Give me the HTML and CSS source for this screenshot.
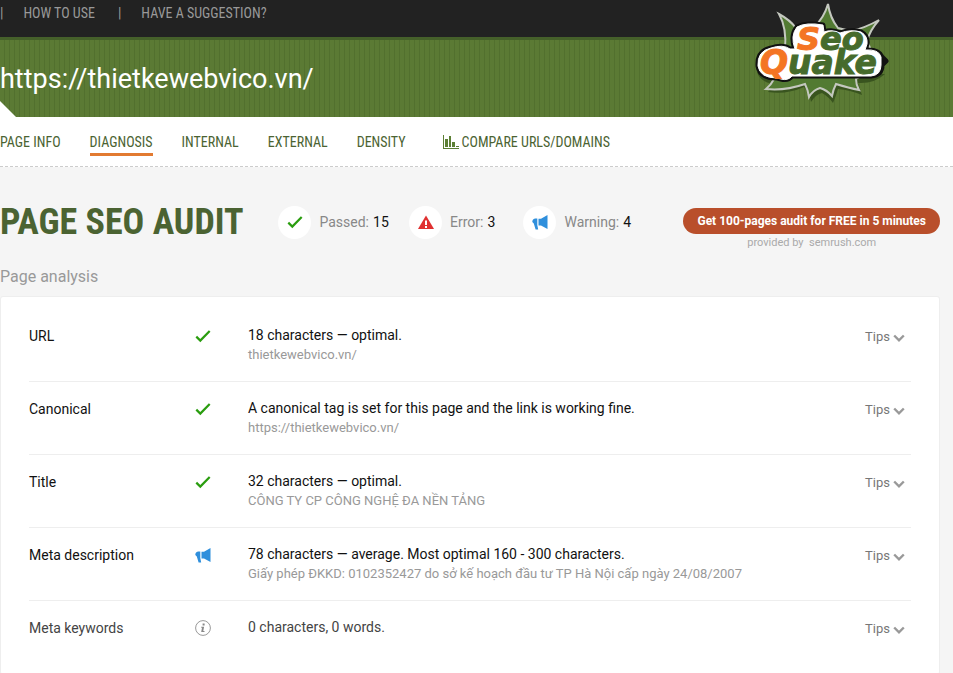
FILE: index.html
```html
<!DOCTYPE html>
<html lang="en">
<head>
    <meta charset="UTF-8">
    <meta name="viewport" content="width=device-width, initial-scale=1.0">
    <title>SEOquake - Diagnosis</title>
    <link rel="stylesheet" href="styles.css">
</head>
<body>
    <svg width="0" height="0" class="sprite" aria-hidden="true">
        <symbol id="check" viewBox="0 0 16 16"><path d="M1.3 8.6 5.3 12.6 14.7 3" fill="none" stroke="#2a9d0f" stroke-width="2.2"/></symbol>
        <symbol id="horn" viewBox="0 0 16 16"><path d="M15.500 1v14L9 11.500H6.500V4.800H9zM5.300 4.500H3Q.2 5 .3 8L1.800 9.500 3.600 15.500h2.600L5.300 11z" fill="#2f8fdc"/></symbol>
        <symbol id="error" viewBox="0 0 16 16"><path d="M8 1.500 16 15H0z" fill="#e03131"/><path d="M7 6.500h2V11H7zM7 12h2v2H7z" fill="#fff"/></symbol>
        <symbol id="info" viewBox="0 0 16 16"><circle cx="8" cy="8" r="7.400" fill="none" stroke="#999"/><path d="M7.600 3.600h2v2h-2zM6.200 6.700h2.900l-.8 4.200h1.200v1H6.200l.8-4.200h-.8z" fill="#888"/></symbol>
        <symbol id="arrow" viewBox="0 0 12 8"><path d="M1.200 1.500 6 6.300l4.800-4.800" fill="none" stroke="#999" stroke-width="2.400"/></symbol>
    </svg>

    <div class="topbar">
        <span>|</span>
        <a href="#how">HOW TO USE</a>
        <span>|</span>
        <a href="#suggest">HAVE A SUGGESTION?</a>
    </div>

    <header class="header">
        <div class="site-url">https://thietkewebvico.vn/</div>
        <a class="logo" href="#home" aria-label="SeoQuake">
            <svg viewBox="0 0 160 115" width="160" height="115">
                <path class="burst-shadow" d="M17 72Q20 82 34 84L28 92Q46 95 64 87 70 94 71 102 76 94 82 93 89 97 93 103 96 96 98 89 110 90 122 95L118 83Q134 84 145 74z"/>
                <path class="burst" d="M39 14Q50 20 56 28L74 27Q84 18 88 4Q90 18 98 28L111 31Q125 28 139 20Q130 30 127 41L138 66 116 79Q116 85 119 90Q109 88 96 84Q93 90 92 96Q87 90 80 88Q73 90 69 97Q68 90 65 84Q45 91 26 89Q31 85 34 79L45 50Q47 28 39 14z"/>
                <g id="plate" class="plate">
                    <path class="plate-edge" d="M57 27Q66 22 83 25L84 32Q92 29 100 33Q111 29 121 32Q128 36 127 44L125 50Q139 49 142 57L146 61 142 65Q142 75 131 76L52 76Q48 81 41 79L37 78Q20 78 18 66Q17 51 31 48Q43 44 50 49L55 49Q50 36 57 27z"/>
                    <path class="plate-fill" d="M57 27Q66 22 83 25L84 32Q92 29 100 33Q111 29 121 32Q128 36 127 44L125 50Q139 49 141 57L141 65Q141 75 131 76L52 76Q48 81 41 79L37 78Q20 78 18 66Q17 51 31 48Q43 44 50 49L55 49Q50 36 57 27z"/>
                </g>
                <text class="seo" x="57" y="50"><tspan class="orange">S</tspan>eo</text>
                <text class="quake" x="20" y="74"><tspan class="orange">Q</tspan>uake</text>
            </svg>
        </a>
    </header>

    <nav class="nav">
        <a href="#info">PAGE INFO</a>
        <a href="#diagnosis" class="active">DIAGNOSIS</a>
        <a href="#internal">INTERNAL</a>
        <a href="#external">EXTERNAL</a>
        <a href="#density">DENSITY</a>
        <a href="#compare" class="compare">
            <svg width="16" height="14" viewBox="0 0 16 14"><path d="M0 0h1v13h15v1H0zM2 4h3v8H2zM6 1h2v11H6zM9 7h3v5H9zM13 11h3v1h-3z" fill="#5c7f34"/></svg>
            COMPARE URLS/DOMAINS
        </a>
    </nav>

    <main class="content">
        <div class="summary">
            <h1>PAGE SEO AUDIT</h1>
            <ul class="stats">
                <li><span class="badge"><svg class="icon"><use href="#check"/></svg></span>Passed: <b>15</b></li>
                <li><span class="badge"><svg class="icon"><use href="#error"/></svg></span>Error: <b>3</b></li>
                <li><span class="badge"><svg class="icon"><use href="#horn"/></svg></span>Warning: <b>4</b></li>
            </ul>
            <div class="promo">
                <button type="button" class="promo-btn">Get 100-pages audit for FREE in 5 minutes</button>
                <div class="provided">provided by &nbsp;<a href="#semrush">semrush.com</a></div>
            </div>
        </div>

        <h2>Page analysis</h2>
        <div class="card">
            <table>
                <tr>
                    <th scope="row">URL</th>
                    <td class="status"><svg class="icon"><use href="#check"/></svg></td>
                    <td class="result">18 characters — optimal.<div class="value">thietkewebvico.vn/</div></td>
                    <td class="tips"><button type="button">Tips <svg width="12" height="8"><use href="#arrow"/></svg></button></td>
                </tr>
                <tr>
                    <th scope="row">Canonical</th>
                    <td class="status"><svg class="icon"><use href="#check"/></svg></td>
                    <td class="result">A canonical tag is set for this page and the link is working fine.<div class="value">https://thietkewebvico.vn/</div></td>
                    <td class="tips"><button type="button">Tips <svg width="12" height="8"><use href="#arrow"/></svg></button></td>
                </tr>
                <tr>
                    <th scope="row">Title</th>
                    <td class="status"><svg class="icon"><use href="#check"/></svg></td>
                    <td class="result">32 characters — optimal.<div class="value">CÔNG TY CP CÔNG NGHỆ ĐA NỀN TẢNG</div></td>
                    <td class="tips"><button type="button">Tips <svg width="12" height="8"><use href="#arrow"/></svg></button></td>
                </tr>
                <tr>
                    <th scope="row">Meta description</th>
                    <td class="status"><svg class="icon"><use href="#horn"/></svg></td>
                    <td class="result">78 characters — average. Most optimal 160 - 300 characters.<div class="value">Giấy phép ĐKKD: 0102352427 do sở kế hoạch đầu tư TP Hà Nội cấp ngày 24/08/2007</div></td>
                    <td class="tips"><button type="button">Tips <svg width="12" height="8"><use href="#arrow"/></svg></button></td>
                </tr>
                <tr class="muted">
                    <th scope="row">Meta keywords</th>
                    <td class="status"><svg class="icon"><use href="#info"/></svg></td>
                    <td class="result">0 characters, 0 words.</td>
                    <td class="tips"><button type="button">Tips <svg width="12" height="8"><use href="#arrow"/></svg></button></td>
                </tr>
            </table>
        </div>
    </main>
</body>
</html>
```
FILE: styles.css
```css
* { box-sizing: border-box; }
body { margin: 0; background-color: #f5f5f5; font-family: Roboto, Arial, sans-serif; font-size: 14px; color: #111; }
a { color: inherit; text-decoration: none; }
.sprite { position: absolute; }
.icon { width: 16px; height: 16px; display: block; }

.topbar, .nav, h1 { font-family: "Roboto Condensed", "Liberation Sans Narrow", Roboto, sans-serif; }
.topbar { display: flex; gap: 20px; height: 37px; padding-top: 5px; background-color: #222; color: #999; line-height: 16px; }
.topbar a { margin-right: 3px; }

.header { position: relative; display: flex; align-items: center; height: 80px; border-top: 3px solid #45602a; background: repeating-linear-gradient(90deg, #5b7a34 0 4px, #52702e 4px 5px); }
.header::after { content: ""; position: absolute; left: 0; bottom: 0; width: 16px; height: 16px; background-color: #fff; clip-path: polygon(0 0, 100% 100%, 0 100%); }
.site-url { font-size: 27px; line-height: 32px; color: #fff; }
.logo { position: absolute; top: -40px; right: 53px; }
.burst { fill: #527a32; stroke: #c4c8bf; stroke-width: 2; }
.burst-shadow { fill: #39541f; }
.plate path { stroke-linejoin: round; }
.plate-edge { fill: #111; stroke: #111; stroke-width: 5; }
.plate-fill { fill: #fff; stroke: #fff; stroke-width: 1; }
.seo, .quake { font-family: "DejaVu Sans", sans-serif; font-weight: bold; font-style: italic; fill: #466b2c; stroke: #466b2c; stroke-width: 1; }
.seo { font-size: 32px; }
.quake { font-size: 33px; }
.orange { fill: #f47524; stroke: #f47524; }

.nav { display: flex; align-items: center; gap: 29px; height: 50px; background-color: #fff; border-bottom: 1px dashed #ccc; color: #4b6332; line-height: 20px; }
.nav a { padding: 4px 0 1px; border-bottom: 3px solid transparent; white-space: nowrap; }
.nav .active { border-bottom-color: #e27a31; }
.nav .compare { display: flex; align-items: center; gap: 3px; margin-left: 8px; }

.content { padding-right: 13px; }
.summary { display: flex; align-items: flex-start; padding-top: 33px; }
h1 { margin: 0 35px 0 0; font-size: 36px; line-height: 44px; color: #4b6332; white-space: nowrap; }
.stats { display: flex; gap: 20px; margin: 0; padding: 0; list-style: none; color: #888; }
.stats li { display: flex; align-items: center; gap: 4px; height: 44px; white-space: nowrap; }
.stats b { min-width: 16px; font-weight: normal; color: #111; }
.badge { display: flex; align-items: center; justify-content: center; width: 33px; height: 33px; margin-right: 4px; border-radius: 50%; background-color: #fff; }
.promo { margin: 8px 0 0 auto; text-align: center; }
.promo-btn { display: block; height: 26px; padding: 0 14px; border: none; border-radius: 13px; background-color: #b94f2b; color: #fff; font: bold 12px Roboto, sans-serif; white-space: nowrap; cursor: pointer; }
.provided { margin-top: 1px; font-size: 11px; line-height: 16px; color: #aaa; }

h2 { margin: 15px 0 8px; font-size: 16px; font-weight: normal; line-height: 22px; color: #999; }
.card { padding: 12px 28px 0; background-color: #fff; border: 1px solid #eee; border-radius: 3px; }
table { width: 100%; border-spacing: 0; }
th, td { height: 73px; padding: 16px 0 0; border-bottom: 1px solid #eee; vertical-align: top; text-align: left; font-weight: normal; line-height: 20px; }
tr:last-child th, tr:last-child td { border-bottom: none; }
th { width: 166px; padding-top: 17px; }
.status { width: 53px; padding-top: 19px; }
.value { font-size: 13px; line-height: 20px; color: #999; }
.tips { width: 46px; padding-top: 18px; }
.tips button { display: flex; align-items: center; gap: 3px; padding: 0; border: none; background: none; font: 13px/20px Roboto, sans-serif; color: #777; cursor: pointer; }
.tips svg { margin-top: 2px; }
.muted { color: #444; }
```
